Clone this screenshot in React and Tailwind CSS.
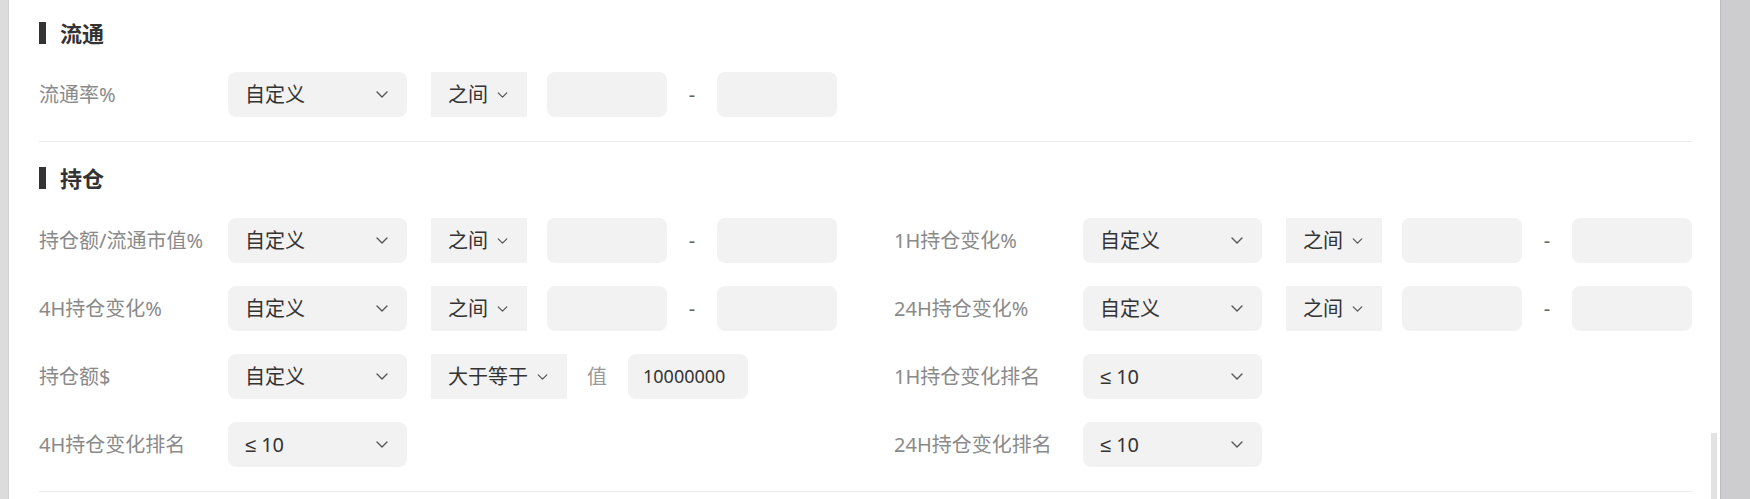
import React from "react";

const font = { fontFamily: '"Noto Sans", "Noto Sans CJK SC", sans-serif' };

function Chevron({ className = "" }) {
  return (
    <svg viewBox="0 0 12 7" className={className} fill="none">
      <path d="M1 1l5 5 5-5" stroke="#555" strokeWidth="1.4" strokeLinecap="round" strokeLinejoin="round" />
    </svg>
  );
}

function Select({ children }) {
  return (
    <div className="flex h-[45px] w-[179px] shrink-0 items-center justify-between rounded-[8px] bg-[#f2f2f2] pl-[17px] pr-[19px] text-[20px] text-[#333]">
      <span>{children}</span>
      <Chevron className="h-[7px] w-[12px]" />
    </div>
  );
}

function Op({ value, wide }) {
  return (
    <div
      className={`ml-[24px] flex h-[45px] shrink-0 items-center bg-[#f2f2f2] pl-[17px] text-[20px] text-[#333] ${
        wide ? "w-[136px]" : "w-[96px]"
      }`}
    >
      <span>{value}</span>
      <Chevron className="ml-[9px] h-[6px] w-[11px]" />
    </div>
  );
}

function Box({ children, className = "" }) {
  return (
    <div className={`flex h-[45px] w-[120px] shrink-0 items-center rounded-[8px] bg-[#f2f2f2] pl-[15px] text-[18px] text-[#333] ${className}`}>
      {children}
    </div>
  );
}

function Label({ children }) {
  return <div className="w-[189px] shrink-0 text-[20px] text-[#8a8a8a]">{children}</div>;
}

function RangeRow({ label }) {
  return (
    <div className="flex items-center">
      <Label>{label}</Label>
      <Select>自定义</Select>
      <Op value="之间" />
      <Box className="ml-[20px]" />
      <div className="flex w-[50px] justify-center text-[20px] text-[#666]">-</div>
      <Box />
    </div>
  );
}

function RankRow({ label }) {
  return (
    <div className="flex items-center">
      <Label>{label}</Label>
      <Select>
        <span className="font-['Liberation_Sans']">≤</span> 10
      </Select>
    </div>
  );
}

function Title({ children }) {
  return (
    <div className="flex h-[22px] items-center gap-[14px]">
      <span className="h-[22px] w-[7px] bg-[#333]" />
      <span className="text-[22px] font-bold leading-none text-[#333]">{children}</span>
    </div>
  );
}

export default function App() {
  return (
    <div className="flex h-[499px] w-full overflow-hidden bg-white" style={font}>
      <div className="w-[9px] shrink-0 border-r border-[#cfcfcf] bg-[#dcdcdc]" />
      <div className="relative flex-1 pl-[30px] pr-[28px] pt-[22px]">
        <section className="border-b border-[#ebebeb] pb-[24px]">
          <Title>流通</Title>
          <div className="mt-[28px] grid grid-cols-[798px_798px] gap-x-[57px]">
            <RangeRow label="流通率%" />
          </div>
        </section>

        <section className="border-b border-[#ebebeb] pb-[24px] pt-[25px]">
          <Title>持仓</Title>
          <div className="mt-[29px] grid grid-cols-[798px_798px] gap-x-[57px] gap-y-[23px]">
            <RangeRow label="持仓额/流通市值%" />
            <RangeRow label="1H持仓变化%" />
            <RangeRow label="4H持仓变化%" />
            <RangeRow label="24H持仓变化%" />
            <div className="flex items-center">
              <Label>持仓额$</Label>
              <Select>自定义</Select>
              <Op value="大于等于" wide />
              <span className="ml-[20px] text-[20px] text-[#999]">值</span>
              <Box className="ml-[21px]">10000000</Box>
            </div>
            <RankRow label="1H持仓变化排名" />
            <RankRow label="4H持仓变化排名" />
            <RankRow label="24H持仓变化排名" />
          </div>
        </section>

        <div className="absolute right-[3px] top-[433px] h-[66px] w-[6px] bg-[#e2e2e2]" />
      </div>
      <div className="w-[30px] shrink-0 border-l border-[#bdbdbf] bg-[#cdcdcf]" />
    </div>
  );
}
